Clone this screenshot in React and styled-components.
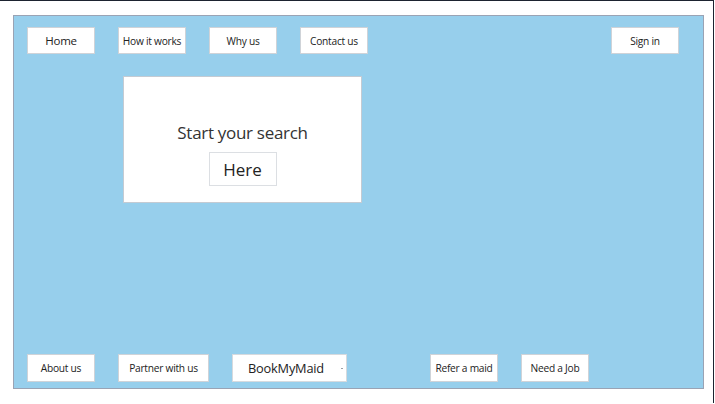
import styled, { createGlobalStyle } from "styled-components"

const GlobalStyle = createGlobalStyle`
html, body {
    margin: 0;
    padding: 0;
    background: #ffffff;
}
body {
    font-family: "Open Sans", "Noto Sans", Arial, sans-serif;
    color: #222;
}
`

const Frame = styled.div`
width: 714px;
height: 403px;
border-top: 1px solid #1d2330;
border-right: 1px solid #1d2330;
box-sizing: border-box;
padding: 14px 0 0 13px;
`

const Panel = styled.div`
width: 691px;
height: 374px;
box-sizing: border-box;
background: #97cfec;
border: 1px solid #9aa3b4;
display: flex;
flex-direction: column;
padding: 11px 24px 6px 13px;
`

const NavBar = styled.div`
display: flex;
align-items: center;
gap: 23px;
`

const NavButton = styled.div`
width: 68px;
height: 27px;
box-sizing: border-box;
background: #fff;
border: 1px solid #cfd3d8;
display: flex;
align-items: center;
justify-content: center;
font-size: ${({ $big }) => ($big ? "11.5px" : "10.2px")};
letter-spacing: -0.25px;
white-space: nowrap;
margin-left: ${({ $right }) => ($right ? "auto" : "0")};
`

const SearchCard = styled.div`
width: 239px;
height: 127px;
box-sizing: border-box;
margin: 22px 0 0 96px;
background: #fff;
border: 1px solid #c4cbd3;
display: flex;
flex-direction: column;
align-items: center;
padding-top: 44px;
`

const SearchTitle = styled.div`
font-size: 17px;
line-height: 24px;
letter-spacing: -0.3px;
color: #333;
`

const HereButton = styled.div`
margin-top: 7px;
width: 68px;
height: 34px;
box-sizing: border-box;
border: 1px solid #dcdfe3;
display: flex;
align-items: center;
justify-content: center;
font-size: 17px;
color: #222;
`

const Footer = styled.div`
margin-top: auto;
display: flex;
align-items: center;
gap: 23px;
`

const FootButton = styled.div`
width: ${({ $w }) => $w || 68}px;
height: 28px;
box-sizing: border-box;
background: #fff;
border: 1px solid #cfd3d8;
display: flex;
align-items: center;
justify-content: center;
font-size: 10.2px;
letter-spacing: -0.25px;
white-space: nowrap;
margin-left: ${({ $gap }) => $gap || 0}px;
`

const BrandSelect = styled.div`
position: relative;
width: 115px;
height: 28px;
box-sizing: border-box;
background: #fff;
border: 1px solid #d6dade;
display: flex;
align-items: center;
padding-left: 15px;
font-size: 12.8px;
letter-spacing: -0.2px;
color: #222;
`

const Caret = styled.span`
position: absolute;
right: 3px;
top: 13px;
width: 2px;
height: 1px;
background: #9aa0a6;
`

export default function App() {
    return (
        <>
            <GlobalStyle />
            <Frame>
                <Panel>
                    <NavBar>
                        <NavButton $big>Home</NavButton>
                        <NavButton>How it works</NavButton>
                        <NavButton>Why us</NavButton>
                        <NavButton>Contact us</NavButton>
                        <NavButton $right>Sign in</NavButton>
                    </NavBar>
                    <SearchCard>
                        <SearchTitle>Start your search</SearchTitle>
                        <HereButton>Here</HereButton>
                    </SearchCard>
                    <Footer>
                        <FootButton>About us</FootButton>
                        <FootButton $w={91}>Partner with us</FootButton>
                        <BrandSelect>
                            BookMyMaid
                            <Caret />
                        </BrandSelect>
                        <FootButton $gap={60}>Refer a maid</FootButton>
                        <FootButton>Need a Job</FootButton>
                    </Footer>
                </Panel>
            </Frame>
        </>
    )
}
